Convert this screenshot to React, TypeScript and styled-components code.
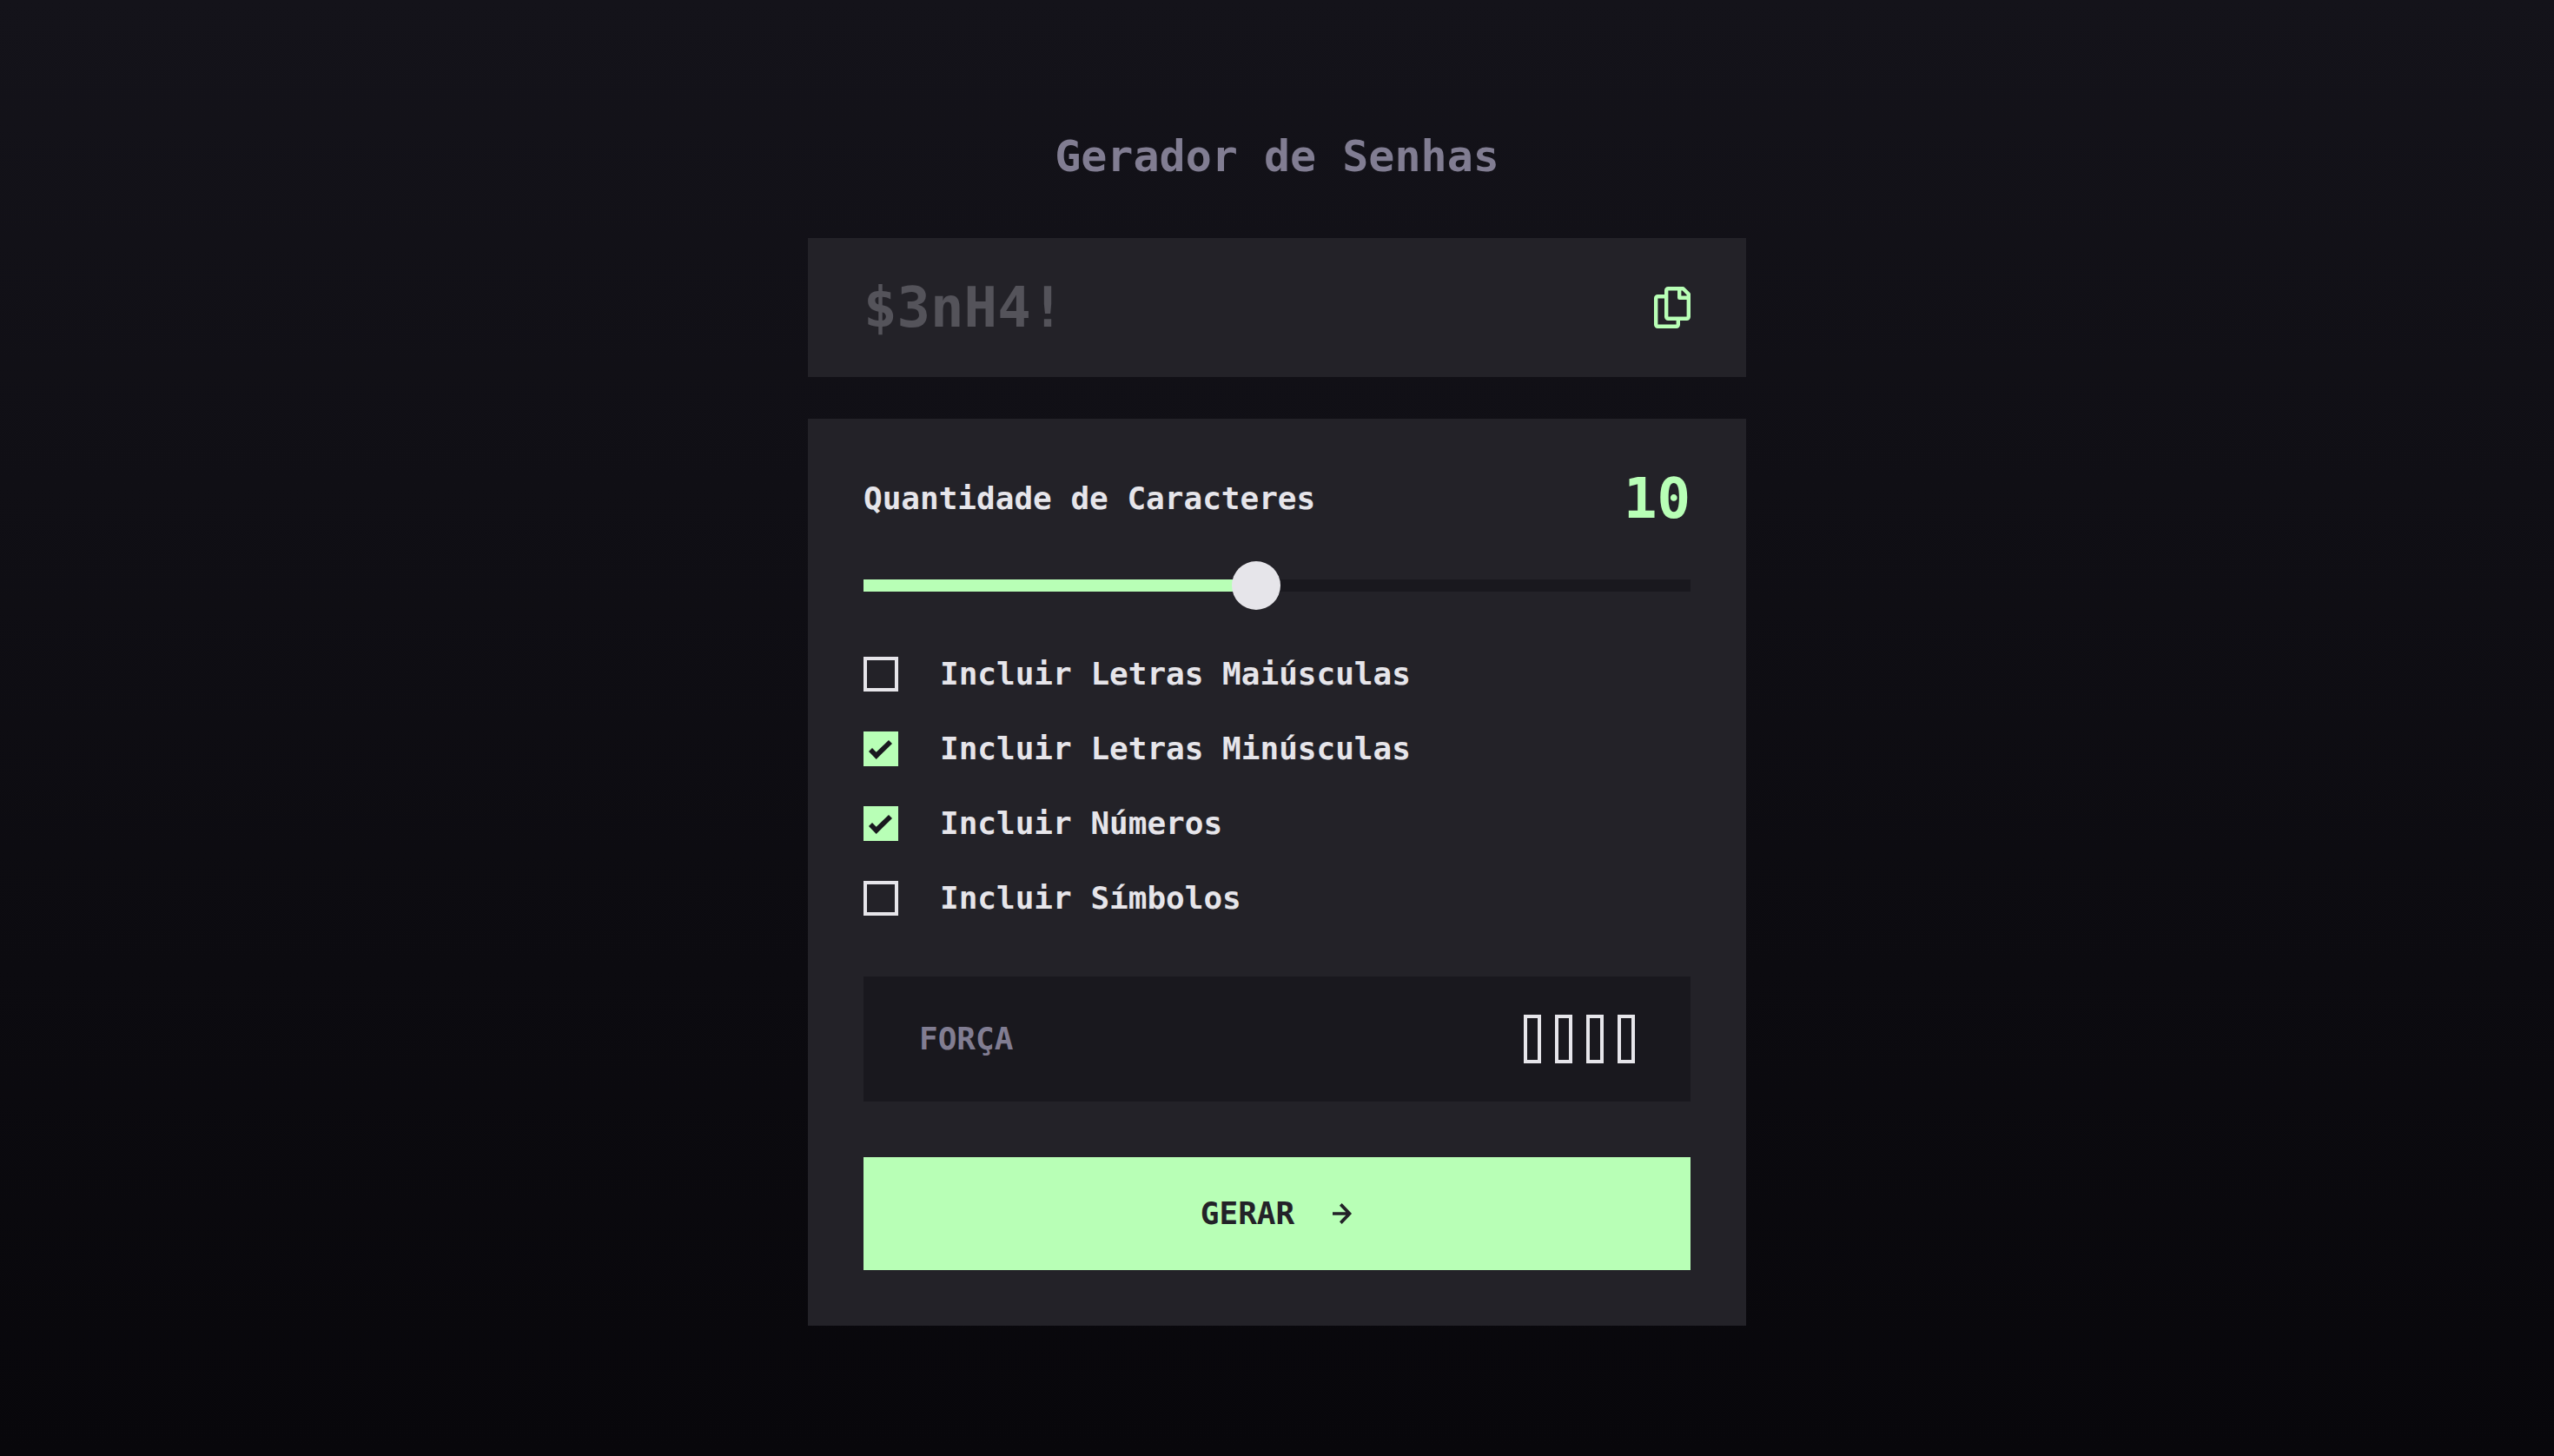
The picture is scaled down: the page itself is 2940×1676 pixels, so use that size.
import React, { useState } from "react";
import styled, { createGlobalStyle } from "styled-components";

const mono = '"DejaVu Sans Mono", "Liberation Mono", monospace';

const GlobalStyle = createGlobalStyle`
  *, *::before, *::after { box-sizing: border-box; }
  body {
    margin: 0;
    background: #08070b;
    color: #e6e5ea;
    font: bold 36px/52px ${mono};
  }
  input, button { font: inherit; color: inherit; }
`;

const Page = styled.main`
  min-height: 100vh;
  display: flex;
  flex-direction: column;
  align-items: center;
  justify-content: center;
  padding: 48px;
  background: linear-gradient(180deg, #14131a 0%, #08070b 100%);
`;

const Title = styled.h1`
  margin: 0 0 64px;
  font-size: 50px;
  line-height: 60px;
  color: #817d92;
`;

const Generator = styled.form`
  width: 100%;
  max-width: 1080px;
  display: grid;
  gap: 48px;
`;

const PasswordBox = styled.div`
  display: flex;
  align-items: center;
  gap: 32px;
  height: 160px;
  padding: 0 64px;
  background: #232228;
`;

const PasswordField = styled.input`
  flex: 1;
  min-width: 0;
  padding: 0;
  border: 0;
  outline: 0;
  background: transparent;
  font-size: 64px;
  line-height: 88px;
  &::placeholder { color: #54535a; opacity: 1; }
`;

const CopyButton = styled.button`
  display: flex;
  padding: 0;
  border: 0;
  background: none;
  color: #b8ffb6;
  cursor: pointer;
`;

const Card = styled.section`
  padding: 48px 64px 64px;
  background: #232228;
`;

const LengthHeader = styled.div`
  display: flex;
  align-items: center;
  justify-content: space-between;
  margin-bottom: 28px;
`;

const LengthValue = styled.output`
  font-size: 64px;
  line-height: 88px;
  color: #b8ffb6;
`;

const Slider = styled.input`
  appearance: none;
  display: block;
  width: 100%;
  height: 56px;
  margin: 0 0 48px;
  background: linear-gradient(#b8ffb6, #b8ffb6) left center / var(--fill) 14px no-repeat,
    linear-gradient(#19181e, #19181e) center / 100% 14px no-repeat;
  cursor: pointer;
  &::-webkit-slider-thumb {
    appearance: none;
    width: 56px;
    height: 56px;
    border-radius: 50%;
    background: #e6e5ea;
  }
`;

const Options = styled.div`
  display: grid;
  gap: 34px;
  margin-bottom: 64px;
`;

const OptionLabel = styled.label`
  display: flex;
  align-items: center;
  gap: 48px;
  cursor: pointer;
`;

const CheckWrap = styled.span`
  display: grid;
  width: 40px;
  height: 40px;
  > * { grid-area: 1 / 1; }
`;

const Checkbox = styled.input`
  appearance: none;
  width: 40px;
  height: 40px;
  margin: 0;
  border: 4px solid #e6e5ea;
  &:checked {
    border-color: #b8ffb6;
    background: #b8ffb6;
  }
  & + svg { visibility: hidden; pointer-events: none; }
  &:checked + svg { visibility: visible; }
`;

const Strength = styled.div`
  display: flex;
  align-items: center;
  justify-content: space-between;
  height: 144px;
  margin-bottom: 64px;
  padding: 0 64px;
  background: #19181e;
  color: #817d92;
`;

const Bars = styled.div`
  display: flex;
  gap: 16px;
`;

const Bar = styled.span`
  width: 20px;
  height: 56px;
  border: 4px solid #e6e5ea;
`;

const Submit = styled.button`
  display: flex;
  align-items: center;
  justify-content: center;
  gap: 44px;
  width: 100%;
  height: 130px;
  padding: 0;
  border: 0;
  background: #b8ffb6;
  color: #232228;
  cursor: pointer;
`;

const CopyIcon = () => (
  <svg width="42" height="48" viewBox="0 0 42 48" fill="none" stroke="currentColor" strokeWidth="4.4" strokeLinejoin="round" aria-hidden="true">
    <path d="M14 11.200H4.200a2 2 0 0 0-2 2v30.600a2 2 0 0 0 2 2h21.600a2 2 0 0 0 2-2V37" />
    <path d="M16.200 2.200H33.500l6.300 6.300V34.800a2 2 0 0 1-2 2H16.200a2 2 0 0 1-2-2V4.200a2 2 0 0 1 2-2Z" />
    <path d="M29.200 2.200V12.800H39.800" />
  </svg>
);

const CheckIcon = () => (
  <svg width="40" height="40" viewBox="0 0 40 40" aria-hidden="true">
    <path d="M6 23L10 19L14.700 23.700L29 10L33 14L14.700 32Z" fill="#19181e" />
  </svg>
);

const ArrowIcon = () => (
  <svg width="24" height="24" viewBox="0 0 24 24" fill="none" stroke="currentColor" strokeWidth="3.7" aria-hidden="true">
    <path d="M0 12h19M9.300 1.400l10.200 10.600L9.300 22.600" />
  </svg>
);

const optionNames = ["Letras Maiúsculas", "Letras Minúsculas", "Números", "Símbolos"];

export default function App() {
  const [length, setLength] = useState(10);
  const [checked, setChecked] = useState([false, true, true, false]);
  const fill = { "--fill": `${((length - 1) / 19) * 100}%` } as React.CSSProperties;

  return (
    <>
      <GlobalStyle />
      <Page>
        <Title>Gerador de Senhas</Title>
        <Generator onSubmit={(e) => e.preventDefault()}>
          <PasswordBox>
            <PasswordField readOnly aria-label="Senha" placeholder="$3nH4!" />
            <CopyButton type="button" aria-label="Copiar">
              <CopyIcon />
            </CopyButton>
          </PasswordBox>
          <Card>
            <LengthHeader>
              <label htmlFor="length">Quantidade de Caracteres</label>
              <LengthValue htmlFor="length">{length}</LengthValue>
            </LengthHeader>
            <Slider
              id="length"
              type="range"
              min={1}
              max={20}
              value={length}
              style={fill}
              onChange={(e) => setLength(Number(e.target.value))}
            />
            <Options>
              {optionNames.map((name, i) => (
                <OptionLabel key={name}>
                  <CheckWrap>
                    <Checkbox
                      type="checkbox"
                      checked={checked[i]}
                      onChange={() => setChecked(checked.map((c, j) => (j === i ? !c : c)))}
                    />
                    <CheckIcon />
                  </CheckWrap>
                  Incluir {name}
                </OptionLabel>
              ))}
            </Options>
            <Strength>
              FORÇA
              <Bars>
                <Bar />
                <Bar />
                <Bar />
                <Bar />
              </Bars>
            </Strength>
            <Submit type="submit">
              GERAR
              <ArrowIcon />
            </Submit>
          </Card>
        </Generator>
      </Page>
    </>
  );
}
